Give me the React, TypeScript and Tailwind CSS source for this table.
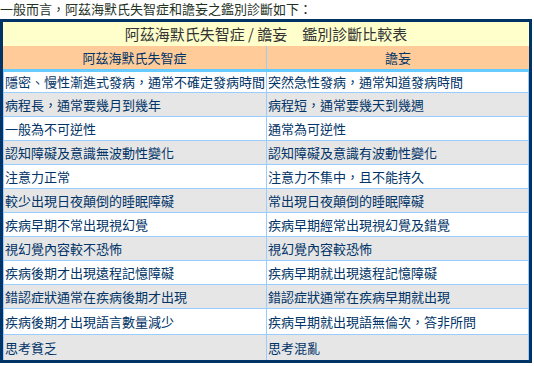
const rows: [string, string][] = [
  ["隱密、慢性漸進式發病，通常不確定發病時間", "突然急性發病，通常知道發病時間"],
  ["病程長，通常要幾月到幾年", "病程短，通常要幾天到幾週"],
  ["一般為不可逆性", "通常為可逆性"],
  ["認知障礙及意識無波動性變化", "認知障礙及意識有波動性變化"],
  ["注意力正常", "注意力不集中，且不能持久"],
  ["較少出現日夜顛倒的睡眠障礙", "常出現日夜顛倒的睡眠障礙"],
  ["疾病早期不常出現視幻覺", "疾病早期經常出現視幻覺及錯覺"],
  ["視幻覺內容較不恐怖", "視幻覺內容較恐怖"],
  ["疾病後期才出現遠程記憶障礙", "疾病早期就出現遠程記憶障礙"],
  ["錯認症狀通常在疾病後期才出現", "錯認症狀通常在疾病早期就出現"],
  ["疾病後期才出現語言數量減少", "疾病早期就出現語無倫次，答非所問"],
  ["思考貧乏", "思考混亂"],
];

// row heights in px (content only, border below is separate)
const heights = [
  "h-[20px]", "h-[23px]", "h-[23px]", "h-[23px]", "h-[23px]", "h-[23px]",
  "h-[23px]", "h-[23px]", "h-[23px]", "h-[23px]", "h-[25px]", "h-[25px]",
];

export default function App() {
  return (
    <div className="w-[534px] h-[366px] bg-white font-['Noto_Sans_CJK_TC','Noto_Sans_CJK_SC',sans-serif] overflow-hidden">
      <p className="h-[19px] text-[13px] leading-[17px] text-[#1f331f] whitespace-nowrap">
        一般而言，阿茲海默氏失智症和譫妄之鑑別診斷如下：
      </p>

      <div className="w-[532px] border-[3px] border-[#003366]">
        {/* title */}
        <div className="h-[24px] bg-[#FFFFCC] flex items-center justify-center text-[15px] text-[#333333] whitespace-nowrap">
          阿茲海默氏失智症 / 譫妄　鑑別診斷比較表
        </div>

        {/* column headers */}
        <div className="grid grid-cols-[264px_1fr] bg-[#FFCC99] border-b-[3px] border-[#66CCFF] text-[13px] text-[#003366]">
          <div className="h-[23px] flex items-center justify-center border-r border-[#99CCFF]">阿茲海默氏失智症</div>
          <div className="h-[23px] flex items-center justify-center">譫妄</div>
        </div>

        {/* body */}
        {rows.map(([left, right], i) => (
          <div
            key={i}
            className={`grid grid-cols-[264px_1fr] text-[13px] text-[#003366] border-[#99CCFF] ${
              i % 2 === 1 ? "bg-[#E6E6E6]" : "bg-white"
            } ${i < rows.length - 1 ? "border-b" : ""}`}
          >
            <div className={`${heights[i]} flex items-center pl-[1px] border-l border-r border-[#99CCFF] whitespace-nowrap`}>
              {left}
            </div>
            <div className={`${heights[i]} flex items-center pl-[1px] border-r border-[#99CCFF] whitespace-nowrap`}>
              {right}
            </div>
          </div>
        ))}
      </div>
    </div>
  );
}
